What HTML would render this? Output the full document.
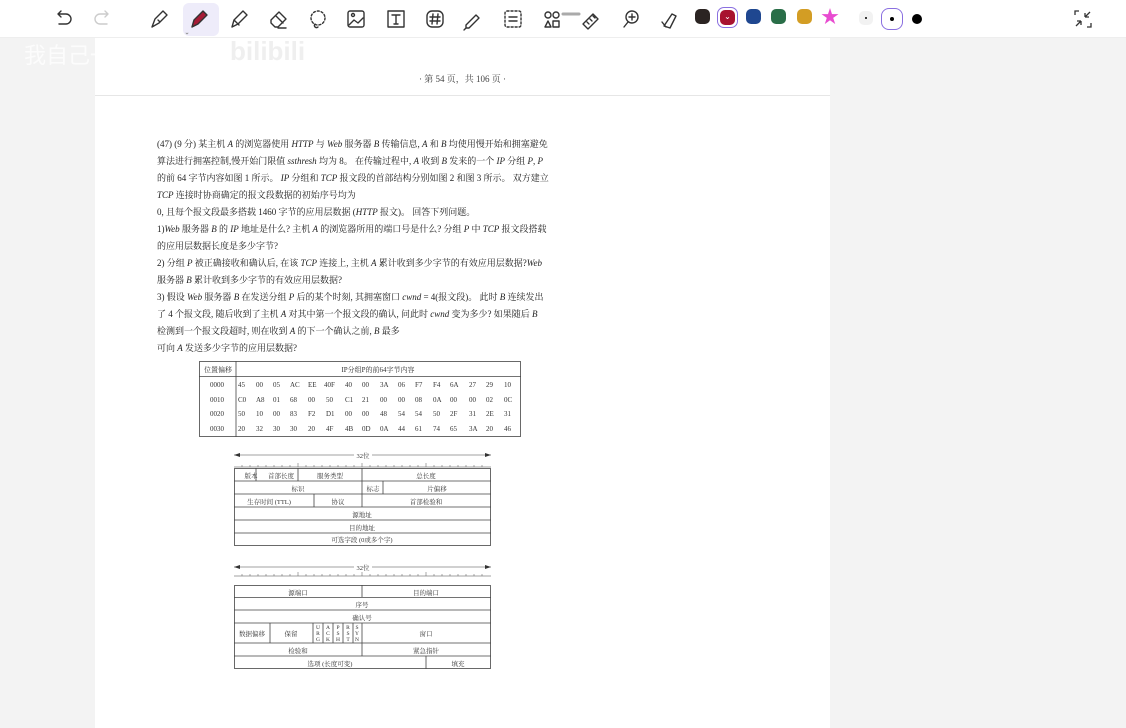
<!DOCTYPE html>
<html><head><meta charset="utf-8">
<style>
*{margin:0;padding:0;box-sizing:border-box}
body{width:1126px;height:720px;overflow:hidden;background:#f3f3f3;font-family:"Liberation Serif","Noto Serif CJK SC",serif;position:relative}
#tb{position:absolute;left:0;top:0;width:1126px;height:38px;background:#fff;border-bottom:1px solid #eee}
#page{position:absolute;left:95px;top:38px;width:735px;height:690px;background:#fff}
.hdr{position:absolute;left:0;top:57px;width:100%;height:1px;background:#e6e6e6}
.t{position:absolute;left:157px;font-size:9px;color:#222;white-space:nowrap}
svg text{font-family:"Liberation Serif","Noto Serif CJK SC",serif;fill:#333}
.ic{position:absolute;top:9px}
</style></head><body>
<div id="tb">
<svg width="1126" height="38" style="position:absolute;left:0;top:0" fill="none" stroke="#333" stroke-width="1.4" stroke-linecap="round" stroke-linejoin="round">
<path d="M58 14h8a5 5 0 0 1 0 10h-7M58 14l3-3M58 14l3 3"/>
<path d="M108 14h-8a5 5 0 0 0 0 10h7M108 14l-3-3M108 14l-3 3" stroke="#ccc"/>
<path d="M152 27l3-8 8-8 4 4-8 8z M158 20l2 2"/>
<rect x="183" y="3" width="36" height="33" rx="6" fill="#eeecfa" stroke="none"/>
<path d="M192 27l2-7 9-9 4 4-9 9z" fill="#a61b36" stroke="#333"/>
<path d="M186 33l1 1 1-1" stroke="#888" stroke-width="0.8"/>
<path d="M232 27l2-7 9-9 4 4-9 9z M234 20l5 5"/>
<path d="M271 20l8-8 7 7-8 8h-3l-4-4z M276 16l7 7 M278 28h8"/>
<circle cx="318" cy="18" r="7" stroke-dasharray="2 2"/><path d="M315 24a2 2 0 1 0 3 3"/>
<rect x="348" y="11" width="16" height="16" rx="2"/><path d="M349 25l5-5 4 3 5-5"/><circle cx="353" cy="15" r="1.5"/>
<rect x="388" y="11" width="16" height="16"/><path d="M392 15h8M396 15v9M394 24h4"/>
<rect x="427" y="11" width="16" height="16" rx="5"/><path d="M433 14l-1 10M438 14l-1 10M430 17h10M430 21h10"/>
<path d="M466 25l10-10 3 3-10 10-3 0z M464 30l2-2"/>
<rect x="505" y="11" width="16" height="16" rx="2" stroke-dasharray="2 2"/><path d="M509 17h8M509 21h8"/>
<circle cx="548" cy="15" r="3"/><circle cx="556" cy="15" r="3"/><path d="M545 27l3-6 3 6z"/><rect x="553" y="21" width="6" height="6"/>
<path d="M563 14h16" stroke="#aaa" stroke-width="3"/>
<path d="M583 24l10-10 5 5-10 10z M587 22l2 2M590 19l2 2M593 16l2 2"/>
<circle cx="632" cy="17" r="6"/><path d="M628 22l-4 5M629 17h6M632 14v6"/>
<path d="M664 26l8-12 4 2-6 12z M662 22l4 5"/>
</svg>
<div class="ic" style="left:695px;width:15px;height:15px;border-radius:5px;background:#2b2422"></div>
<div class="ic" style="left:717px;top:7px;width:21px;height:21px;border-radius:7px;border:1.5px solid #8a6fe0"></div>
<div class="ic" style="left:720px;top:10px;width:15px;height:15px;border-radius:5px;background:#a8122f;color:#fff;font-size:8px;text-align:center;line-height:14px">⌄</div>
<div class="ic" style="left:746px;width:15px;height:15px;border-radius:5px;background:#1f4790"></div>
<div class="ic" style="left:771px;width:15px;height:15px;border-radius:5px;background:#2a6e48"></div>
<div class="ic" style="left:797px;width:15px;height:15px;border-radius:5px;background:#d39d24"></div>
<div class="ic" style="left:821px;top:7px;color:#e84bd0;font-size:18px;line-height:20px">★</div>
<div class="ic" style="left:859px;top:11px;width:14px;height:14px;border-radius:5px;background:#f2f2f2"></div>
<div class="ic" style="left:865px;top:17px;width:2px;height:2px;border-radius:50%;background:#000"></div>
<div class="ic" style="left:881px;top:8px;width:22px;height:22px;border-radius:8px;border:1.5px solid #8a6fe0"></div>
<div class="ic" style="left:890px;top:17px;width:4px;height:4px;border-radius:50%;background:#000"></div>
<div class="ic" style="left:912px;top:14px;width:10px;height:10px;border-radius:50%;background:#000"></div>
<svg width="20" height="20" style="position:absolute;left:1073px;top:9px" fill="none" stroke="#333" stroke-width="1.3"><path d="M2 6V2h4M18 14v4h-4M12 8l5-5M12 8h4M12 8V4M8 12l-5 5M8 12H4M8 12v4"/></svg>
</div>
<div id="page"><div style="position:absolute;top:34px;width:100%;text-align:center;font-size:9px;color:#444">· 第 54 页，共 106 页 ·</div><div class="hdr"></div></div>
<div style="position:absolute;left:24px;top:38px;font-size:22px;color:rgba(255,255,255,0.7);font-family:'Noto Sans CJK SC',sans-serif">我自己一个人</div>
<div style="position:absolute;left:230px;top:36px;font-size:26px;font-weight:bold;color:rgba(235,235,235,0.8);font-family:'Liberation Sans',sans-serif">bilibili</div>
<div class="t" style="top:137px">(47) (9 分) 某主机 <i>A</i> 的浏览器使用 <i>HTTP</i> 与 <i>Web</i> 服务器 <i>B</i> 传输信息, <i>A</i> 和 <i>B</i> 均使用慢开始和拥塞避免</div>
<div class="t" style="top:154px">算法进行拥塞控制,慢开始门限值 <i>ssthresh</i> 均为 8。 在传输过程中, <i>A</i> 收到 <i>B</i> 发来的一个 <i>IP</i> 分组 <i>P</i>, <i>P</i></div>
<div class="t" style="top:171px">的前 64 字节内容如图 1 所示。 <i>IP</i> 分组和 <i>TCP</i> 报文段的首部结构分别如图 2 和图 3 所示。 双方建立</div>
<div class="t" style="top:188px"><i>TCP</i> 连接时协商确定的报文段数据的初始序号均为</div>
<div class="t" style="top:205px">0, 且每个报文段最多搭载 1460 字节的应用层数据 (<i>HTTP</i> 报文)。 回答下列问题。</div>
<div class="t" style="top:222px">1)<i>Web</i> 服务器 <i>B</i> 的 <i>IP</i> 地址是什么? 主机 <i>A</i> 的浏览器所用的端口号是什么? 分组 <i>P</i> 中 <i>TCP</i> 报文段搭载</div>
<div class="t" style="top:239px">的应用层数据长度是多少字节?</div>
<div class="t" style="top:256px">2) 分组 <i>P</i> 被正确接收和确认后, 在该 <i>TCP</i> 连接上, 主机 <i>A</i> 累计收到多少字节的有效应用层数据?<i>Web</i></div>
<div class="t" style="top:273px">服务器 <i>B</i> 累计收到多少字节的有效应用层数据?</div>
<div class="t" style="top:290px">3) 假设 <i>Web</i> 服务器 <i>B</i> 在发送分组 <i>P</i> 后的某个时刻, 其拥塞窗口 <i>cwnd</i> = 4(报文段)。 此时 <i>B</i> 连续发出</div>
<div class="t" style="top:307px">了 4 个报文段, 随后收到了主机 <i>A</i> 对其中第一个报文段的确认, 问此时 <i>cwnd</i> 变为多少? 如果随后 <i>B</i></div>
<div class="t" style="top:324px">检测到一个报文段超时, 则在收到 <i>A</i> 的下一个确认之前, <i>B</i> 最多</div>
<div class="t" style="top:341px">可向 <i>A</i> 发送多少字节的应用层数据?</div>

<svg width="1126" height="720" style="position:absolute;left:0;top:0" font-size="7">
<g stroke="#444" fill="none" stroke-width="0.8">
<rect x="199.5" y="361.5" width="321" height="75"/>
<line x1="236" y1="361" x2="236" y2="437"/><line x1="199" y1="376.5" x2="521" y2="376.5"/>
<rect x="234.5" y="468.5" width="256" height="77"/>
<path d="M234 481h257M234 494h257M234 507h257M234 520h257M234 533h257M298 468v13M256 468v13M362 468v39M383 481v13M314 494v13"/>
<rect x="234.5" y="585.5" width="256" height="83"/>
<path d="M234 597.5h257M234 610h257M234 623h257M234 643h257M234 656h257M362 585v12M362 623v33M426 656v13M270 623v20M313 623v20M323 623v20M333 623v20M343 623v20M353 623v20"/>
<path d="M234 467h257M234 576h257" stroke-width="0.6"/>
<path d="M234 455h120M372 455h119M234 567h120M372 567h119" stroke-width="0.6"/>
</g>
<g fill="#333"><path d="M234 455l6-2v4zM491 455l-6-2v4zM234 567l6-2v4zM491 567l-6-2v4z"/></g>
<g stroke="#555" stroke-width="0.5">
<path d="M242 467v-2M250 467v-2M258 467v-2M266 467v-2M274 467v-2M282 467v-2M290 467v-2M298 467v-4M306 467v-2M314 467v-2M322 467v-2M330 467v-2M338 467v-2M346 467v-2M354 467v-2M362 467v-4M370 467v-2M378 467v-2M386 467v-2M394 467v-2M402 467v-2M410 467v-2M418 467v-2M426 467v-4M434 467v-2M442 467v-2M450 467v-2M458 467v-2M466 467v-2M474 467v-2M482 467v-2"/>
<path d="M242 576v-2M250 576v-2M258 576v-2M266 576v-2M274 576v-2M282 576v-2M290 576v-2M298 576v-4M306 576v-2M314 576v-2M322 576v-2M330 576v-2M338 576v-2M346 576v-2M354 576v-2M362 576v-4M370 576v-2M378 576v-2M386 576v-2M394 576v-2M402 576v-2M410 576v-2M418 576v-2M426 576v-4M434 576v-2M442 576v-2M450 576v-2M458 576v-2M466 576v-2M474 576v-2M482 576v-2"/>
</g>
<text x="218" y="372" text-anchor="middle">位置偏移</text>
<text x="378" y="372" text-anchor="middle">IP分组P的前64字节内容</text>
<g text-anchor="middle">
<text x="217" y="387">0000</text><text x="217" y="402">0010</text><text x="217" y="416">0020</text><text x="217" y="431">0030</text>
</g>
<g font-size="7">
<text y="387"><tspan x="238">45</tspan><tspan x="256">00</tspan><tspan x="273">05</tspan><tspan x="290">AC</tspan><tspan x="308">EE</tspan><tspan x="324">40F</tspan><tspan x="345">40</tspan><tspan x="362">00</tspan><tspan x="380">3A</tspan><tspan x="398">06</tspan><tspan x="415">F7</tspan><tspan x="433">F4</tspan><tspan x="450">6A</tspan><tspan x="469">27</tspan><tspan x="486">29</tspan><tspan x="504">10</tspan></text>
<text y="402"><tspan x="238">C0</tspan><tspan x="256">A8</tspan><tspan x="273">01</tspan><tspan x="290">68</tspan><tspan x="308">00</tspan><tspan x="326">50</tspan><tspan x="345">C1</tspan><tspan x="362">21</tspan><tspan x="380">00</tspan><tspan x="398">00</tspan><tspan x="415">08</tspan><tspan x="433">0A</tspan><tspan x="450">00</tspan><tspan x="469">00</tspan><tspan x="486">02</tspan><tspan x="504">0C</tspan></text>
<text y="416"><tspan x="238">50</tspan><tspan x="256">10</tspan><tspan x="273">00</tspan><tspan x="290">83</tspan><tspan x="308">F2</tspan><tspan x="326">D1</tspan><tspan x="345">00</tspan><tspan x="362">00</tspan><tspan x="380">48</tspan><tspan x="398">54</tspan><tspan x="415">54</tspan><tspan x="433">50</tspan><tspan x="450">2F</tspan><tspan x="469">31</tspan><tspan x="486">2E</tspan><tspan x="504">31</tspan></text>
<text y="431"><tspan x="238">20</tspan><tspan x="256">32</tspan><tspan x="273">30</tspan><tspan x="290">30</tspan><tspan x="308">20</tspan><tspan x="326">4F</tspan><tspan x="345">4B</tspan><tspan x="362">0D</tspan><tspan x="380">0A</tspan><tspan x="398">44</tspan><tspan x="415">61</tspan><tspan x="433">74</tspan><tspan x="450">65</tspan><tspan x="469">3A</tspan><tspan x="486">20</tspan><tspan x="504">46</tspan></text>
</g>
<g font-size="6.5" text-anchor="middle">
<text x="363" y="458">32位</text><text x="363" y="570">32位</text>
<text x="251" y="478">版本</text><text x="281" y="478">首部长度</text><text x="330" y="478">服务类型</text><text x="426" y="478">总长度</text>
<text x="298" y="491">标识</text><text x="373" y="491">标志</text><text x="437" y="491">片偏移</text>
<text x="269" y="504">生存时间 (TTL)</text><text x="338" y="504">协议</text><text x="426" y="504">首部检验和</text>
<text x="362" y="517">源地址</text><text x="362" y="530">目的地址</text><text x="362" y="542">可选字段 (0或多个字)</text>
<text x="298" y="595">源端口</text><text x="426" y="595">目的端口</text>
<text x="362" y="607">序号</text><text x="362" y="620">确认号</text>
<text x="252" y="636">数据偏移</text><text x="291" y="636">保留</text><text x="426" y="636">窗口</text>
<text x="298" y="653">检验和</text><text x="426" y="653">紧急指针</text>
<text x="330" y="666">选项 (长度可变)</text><text x="458" y="666">填充</text>
<g font-size="5.5"><text x="318" y="629">U</text><text x="318" y="635">R</text><text x="318" y="641">G</text>
<text x="328" y="629">A</text><text x="328" y="635">C</text><text x="328" y="641">K</text>
<text x="338" y="629">P</text><text x="338" y="635">S</text><text x="338" y="641">H</text>
<text x="348" y="629">R</text><text x="348" y="635">S</text><text x="348" y="641">T</text>
<text x="357" y="629">S</text><text x="357" y="635">Y</text><text x="357" y="641">N</text></g>
</g>
</svg>
</body></html>
